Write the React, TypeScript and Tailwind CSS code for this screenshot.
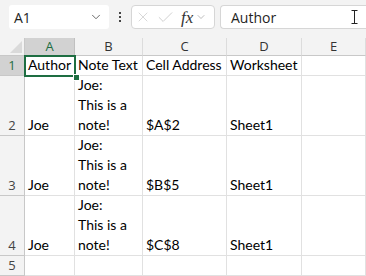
import { ChevronDown, X, Check } from "lucide-react";

const cols = ["A", "B", "C", "D", "E"];

type Row = { n: number; h: string; cells: string[][] };

const rows: Row[] = [
  { n: 1, h: "h-[20px]", cells: [["Author"], ["Note Text"], ["Cell Address"], ["Worksheet"], []] },
  { n: 2, h: "h-[60px]", cells: [["Joe"], ["Joe:", "This is a", "note!"], ["$A$2"], ["Sheet1"], []] },
  { n: 3, h: "h-[60px]", cells: [["Joe"], ["Joe:", "This is a", "note!"], ["$B$5"], ["Sheet1"], []] },
  { n: 4, h: "h-[60px]", cells: [["Joe"], ["Joe:", "This is a", "note!"], ["$C$8"], ["Sheet1"], []] },
  { n: 5, h: "h-[20px]", cells: [[], [], [], [], []] },
];

const App = () => {
  return (
    <div className="w-[366px] h-[276px] overflow-hidden bg-white">
      {/* formula bar */}
      <div className="h-[38px] bg-[#f3f3f3] flex items-start pt-[5px] font-['Open_Sans',sans-serif] text-[14px] text-[#1f1f1f]">
        <div className="ml-[9px] w-[100px] h-[24px] bg-white rounded-[3px] flex items-center pl-[5px] pr-[6px]">
          <span className="flex-1">A1</span>
          <ChevronDown className="w-[14px] h-[14px] text-[#555]" strokeWidth={1.5} />
        </div>
        <div className="w-[22px] h-[24px] flex flex-col items-center justify-center gap-[2px]">
          <span className="w-[2px] h-[2px] bg-[#444]" />
          <span className="w-[2px] h-[2px] bg-[#444]" />
          <span className="w-[2px] h-[2px] bg-[#444]" />
        </div>
        <div className="w-[84px] h-[24px] bg-white border border-[#d6d6d6] rounded-[4px] flex items-center pl-[3px]">
          <X className="w-[16px] h-[16px] text-[#c4c4c4]" strokeWidth={1} />
          <Check className="w-[19px] h-[19px] ml-[5px] text-[#c4c4c4]" strokeWidth={1} />
          <span className="ml-[6px] font-['Liberation_Serif',serif] italic text-[17px] leading-none text-[#333]">fx</span>
          <ChevronDown className="w-[12px] h-[12px] ml-[2px] text-[#999]" strokeWidth={1.3} />
        </div>
        <div className="ml-[5px] flex-1 h-[24px] bg-white border border-[#d6d6d6] border-r-0 rounded-l-[4px] flex items-center pl-[10px] pr-[6px]">
          <span className="flex-1">Author</span>
          <svg width="7" height="14" viewBox="0 0 7 14" className="mr-[2px]">
            <path d="M0.5 0.5h6M3.5 0.5v13M0.5 13.5h6" stroke="#222" strokeWidth="1" fill="none" />
          </svg>
        </div>
      </div>

      {/* grid */}
      <div className="relative grid grid-cols-[25px_50px_68px_84px_75px_1fr] font-['Lato',sans-serif] text-[14px] text-black">
        <div className="h-[18px] bg-[#f3f3f3] border-r border-b border-[#c8c8c8] relative">
          <svg width="12" height="12" viewBox="0 0 12 12" className="absolute right-[2px] bottom-[2px]">
            <path d="M12 0V12H0Z" fill="#dadada" />
          </svg>
        </div>
        {cols.map((c) => (
          <div
            key={c}
            className={`h-[18px] flex items-center justify-center border-r border-b font-['Open_Sans',sans-serif] text-[13px] ${
              c === "A" ? "bg-[#d2d2d2] text-[#1e6e42] border-[#c0c0c0]" : "bg-[#f3f3f3] text-[#333] border-r-[#dcdcdc] border-b-[#c8c8c8]"
            }`}
          >
            {c}
          </div>
        ))}

        {rows.map((r) => (
          <div key={r.n} className="contents">
            <div
              className={`${r.h} flex items-end justify-center pb-[1px] border-r border-b border-[#c8c8c8] font-['Open_Sans',sans-serif] text-[13px] leading-[18px] ${
                r.n === 1 ? "bg-[#d2d2d2] text-[#1e6e42]" : "bg-[#f3f3f3] text-[#444]"
              }`}
            >
              {r.n}
            </div>
            {r.cells.map((lines, i) => (
              <div key={i} className={`${r.h} flex flex-col justify-end pl-[3px] border-r border-b border-[#e1e1e1] leading-[20px] whitespace-nowrap overflow-hidden`}>
                {lines.map((l, j) => (
                  <span key={j}>{l}</span>
                ))}
              </div>
            ))}
          </div>
        ))}

        {/* active cell */}
        <div className="absolute left-[24px] top-[17px] w-[52px] h-[22px] border-2 border-[#1e6e42]" />
        <div className="absolute left-[73px] top-[36px] w-[5px] h-[5px] bg-[#1e6e42] border border-white box-content" />
      </div>
    </div>
  );
};

export default App;
